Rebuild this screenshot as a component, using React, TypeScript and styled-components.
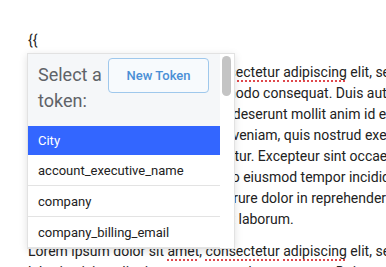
import { FC } from "react";
import styled, { createGlobalStyle } from "styled-components";

const GlobalStyle = createGlobalStyle`
    html, body {
        margin: 0;
        padding: 0;
        background: #ffffff;
        overflow: hidden;
    }
    body {
        font-family: Roboto, "Noto Sans", "Liberation Sans", sans-serif;
        color: #222222;
    }
`;

const TOKENS = [
    "City",
    "account_executive_name",
    "company",
    "company_billing_email",
    "company_name",
    "company_phone",
    "contact_email",
    "contact_first_name",
    "contact_last_name",
    "contact_phone",
    "country",
    "created_date",
    "deal_amount",
    "deal_name",
    "due_date",
    "invoice_number",
    "owner_email",
    "owner_name",
    "postal_code",
    "product_name",
    "quote_number",
    "state",
    "street_address",
    "today",
];

const Page = styled.div`
    position: relative;
    width: 900px;
    padding: 30px 0 0 28px;
    font-size: 14px;
    line-height: 21px;
`;

const Para = styled.p`
    margin: 0 0 11px;
`;

const Line = styled.span`
    display: block;
    white-space: nowrap;
`;

const Typo = styled.span`
    text-decoration: underline dotted #e0474c;
    text-decoration-thickness: 2px;
    text-underline-offset: 3px;
`;

const Menu = styled.div`
    position: absolute;
    left: 27px;
    top: 53px;
    width: 206px;
    height: 194px;
    display: flex;
    background: #ffffff;
    border: 1px solid #e2e2e2;
    box-shadow: 0 2px 8px rgba(0, 0, 0, 0.12);
    overflow: hidden;
`;

const List = styled.div`
    flex: 1;
    min-width: 0;
    overflow: hidden;
`;

const Header = styled.div`
    display: flex;
    align-items: flex-start;
    gap: 4px;
    height: 72px;
    box-sizing: border-box;
    padding: 4px 11px 0 10px;
    background: #f5f7f9;
`;

const Label = styled.div`
    flex: 1;
    padding-top: 4px;
    font-size: 18px;
    line-height: 26px;
    color: #5f6368;
`;

const NewButton = styled.button`
    width: 101px;
    height: 35px;
    flex-shrink: 0;
    border: 1px solid #9fc8ec;
    border-radius: 4px;
    background: #f7fafd;
    color: #4a8fd6;
    font-family: Roboto, "Noto Sans", "Liberation Sans", sans-serif;
    font-size: 13px;
    font-weight: 500;
    cursor: pointer;
`;

const Item = styled.div<{ $active?: boolean }>`
    padding: ${p => (p.$active ? "6px 10px" : "7px 10px 6px")};
    font-size: 13px;
    line-height: 17px;
    white-space: nowrap;
    background: ${p => (p.$active ? "#3366ff" : "#ffffff")};
    color: ${p => (p.$active ? "#ffffff" : "#222222")};
    border-bottom: ${p => (p.$active ? "none" : "1px solid #e3e3e3")};
`;

const Track = styled.div`
    width: 14px;
    flex-shrink: 0;
    padding: 2px 2px 0 2px;
    box-sizing: border-box;
    background: #ffffff;
`;

const Thumb = styled.div`
    width: 9px;
    height: 40px;
    border-radius: 5px;
    background: #c4c4c4;
`;

const TokenMenu: FC = () => {
    return (
        <Menu>
            <List>
                <Header>
                    <Label>Select a token:</Label>
                    <NewButton>New Token</NewButton>
                </Header>
                {TOKENS.map((t, i) => (
                    <Item key={t} $active={i === 0}>
                        {t}
                    </Item>
                ))}
            </List>
            <Track>
                <Thumb />
            </Track>
        </Menu>
    );
};

const App: FC = () => {
    return (
        <>
            <GlobalStyle />
            <Page>
                <Para>{"{{"}</Para>
                <Para>
                    <Line>
                        Lorem ipsum dolor sit amet, <Typo>consectetur</Typo> <Typo>adipiscing</Typo> elit, sed do eiusmod tempor incididunt
                    </Line>
                    <Line>laboris nisi ut aliquip ex ea commodo consequat. Duis aute irure dolor in</Line>
                    <Line>proident, sunt in culpa qui officia deserunt mollit anim id est laborum.</Line>
                    <Line>magna aliqua. Ut enim ad minim veniam, quis nostrud exercitation ullamco</Line>
                    <Line>cillum dolore eu fugiat nulla pariatur. Excepteur sint occaecat cupidatat non</Line>
                    <Line>consectetur adipiscing elit, sed do eiusmod tempor incididunt ut labore</Line>
                    <Line>commodo consequat. Duis aute irure dolor in reprehenderit in voluptate</Line>
                    <Line>officia deserunt mollit anim id est laborum.</Line>
                </Para>
                <Para>
                    <Line>
                        Lorem ipsum dolor sit <Typo>amet</Typo>, <Typo>consectetur</Typo> <Typo>adipiscing</Typo> elit, sed do eiusmod tempor incididunt
                    </Line>
                    <Line>laboris nisi ut aliquip ex ea commodo consequat. Duis aute irure dolor in</Line>
                </Para>
                <TokenMenu />
            </Page>
        </>
    );
};

export default App;
